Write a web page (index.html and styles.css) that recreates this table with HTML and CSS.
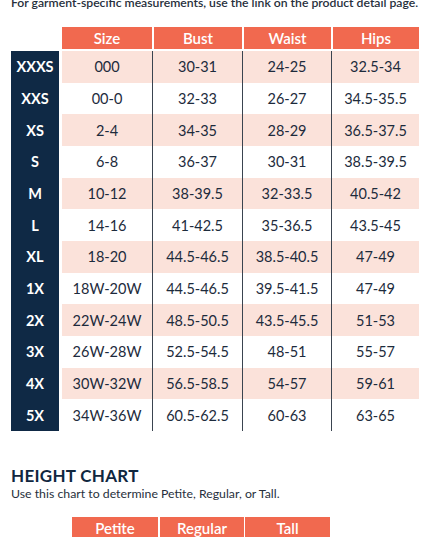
FILE: index.html
```html
<!DOCTYPE html>
<html lang="en">
<head>
    <meta charset="UTF-8">
    <meta name="viewport" content="width=device-width, initial-scale=1.0">
    <title>Size Chart</title>
    <link rel="stylesheet" href="styles.css">
</head>
<body>
<div class="page">
    <p class="note">For garment-specific measurements, use the link on the product detail page.</p>

    <div class="chart">
        <div class="head">
            <div class="spacer"></div>
            <div class="hcell c1">Size</div>
            <div class="hcell c2">Bust</div>
            <div class="hcell c3">Waist</div>
            <div class="hcell c4">Hips</div>
        </div>
        <div class="row alt"><div class="label">XXXS</div><div class="cell c1">000</div><div class="cell c2">30-31</div><div class="cell c3">24-25</div><div class="cell c4">32.5-34</div></div>
        <div class="row"><div class="label">XXS</div><div class="cell c1">00-0</div><div class="cell c2">32-33</div><div class="cell c3">26-27</div><div class="cell c4">34.5-35.5</div></div>
        <div class="row alt"><div class="label">XS</div><div class="cell c1">2-4</div><div class="cell c2">34-35</div><div class="cell c3">28-29</div><div class="cell c4">36.5-37.5</div></div>
        <div class="row"><div class="label">S</div><div class="cell c1">6-8</div><div class="cell c2">36-37</div><div class="cell c3">30-31</div><div class="cell c4">38.5-39.5</div></div>
        <div class="row alt"><div class="label">M</div><div class="cell c1">10-12</div><div class="cell c2">38-39.5</div><div class="cell c3">32-33.5</div><div class="cell c4">40.5-42</div></div>
        <div class="row"><div class="label">L</div><div class="cell c1">14-16</div><div class="cell c2">41-42.5</div><div class="cell c3">35-36.5</div><div class="cell c4">43.5-45</div></div>
        <div class="row alt"><div class="label">XL</div><div class="cell c1">18-20</div><div class="cell c2">44.5-46.5</div><div class="cell c3">38.5-40.5</div><div class="cell c4">47-49</div></div>
        <div class="row"><div class="label">1X</div><div class="cell c1">18W-20W</div><div class="cell c2">44.5-46.5</div><div class="cell c3">39.5-41.5</div><div class="cell c4">47-49</div></div>
        <div class="row alt"><div class="label">2X</div><div class="cell c1">22W-24W</div><div class="cell c2">48.5-50.5</div><div class="cell c3">43.5-45.5</div><div class="cell c4">51-53</div></div>
        <div class="row"><div class="label">3X</div><div class="cell c1">26W-28W</div><div class="cell c2">52.5-54.5</div><div class="cell c3">48-51</div><div class="cell c4">55-57</div></div>
        <div class="row alt"><div class="label">4X</div><div class="cell c1">30W-32W</div><div class="cell c2">56.5-58.5</div><div class="cell c3">54-57</div><div class="cell c4">59-61</div></div>
        <div class="row"><div class="label">5X</div><div class="cell c1">34W-36W</div><div class="cell c2">60.5-62.5</div><div class="cell c3">60-63</div><div class="cell c4">63-65</div></div>
    </div>

    <h2 class="title">HEIGHT CHART</h2>
    <p class="sub">Use this chart to determine Petite, Regular, or Tall.</p>

    <div class="height-head">
        <div class="hcell h1">Petite</div>
        <div class="hcell h2">Regular</div>
        <div class="hcell h3">Tall</div>
    </div>
</div>
</body>
</html>
```

FILE: styles.css
```css
*{
    margin: 0;
    padding: 0;
    box-sizing: border-box;
}
body{
    background: #fff;
    color: #1d2b3c;
    font-family: "Lato", "Liberation Sans", sans-serif;
    overflow: hidden;
}
.page{
    padding: 0 11px;
}
.note{
    font-size: 12.2px;
    line-height: 16px;
    margin-top: -5px;
    font-weight: 600;
    color: #27303c;
    white-space: nowrap;
}
.chart{
    margin-top: 16px;
}
.head{
    display: flex;
    height: 22px;
    margin-bottom: 2px;
}
.spacer{
    width: 51px;
}
.hcell{
    background: #f1694f;
    color: #fff;
    font-size: 15px;
    font-weight: 600;
    display: flex;
    align-items: center;
    justify-content: center;
}
.head .hcell + .hcell{
    border-left: 2px solid #fff;
}
.row{
    display: flex;
    height: 31.67px;
}
.label{
    width: 48px;
    margin-right: 3px;
    background: #0f2945;
    color: #fff;
    font-size: 14.5px;
    font-weight: 700;
    display: flex;
    align-items: center;
    justify-content: center;
}
.cell{
    font-size: 14.5px;
    display: flex;
    align-items: center;
    justify-content: center;
}
.row .cell + .cell{
    border-left: 1px solid #3a4450;
}
.row.alt .cell{
    background-color: #fbe2da;
}
.c1{ width: 90px; }
.c2{ width: 90px; }
.c3{ width: 89px; }
.c4{ width: 88px; }

.title{
    font-size: 17px;
    font-weight: 700;
    color: #10273f;
    letter-spacing: 0.3px;
    margin-top: 35px;
    line-height: 20px;
}
.sub{
    font-size: 12.3px;
    line-height: 16px;
    color: #27303c;
}
.height-head{
    display: flex;
    height: 22px;
    margin-top: 15px;
    margin-left: 61px;
}
.h1{ width: 86px; }
.h2{ width: 86px; border-left: 2px solid #fff; }
.h3{ width: 86px; border-left: 1px solid #fff; }
```
